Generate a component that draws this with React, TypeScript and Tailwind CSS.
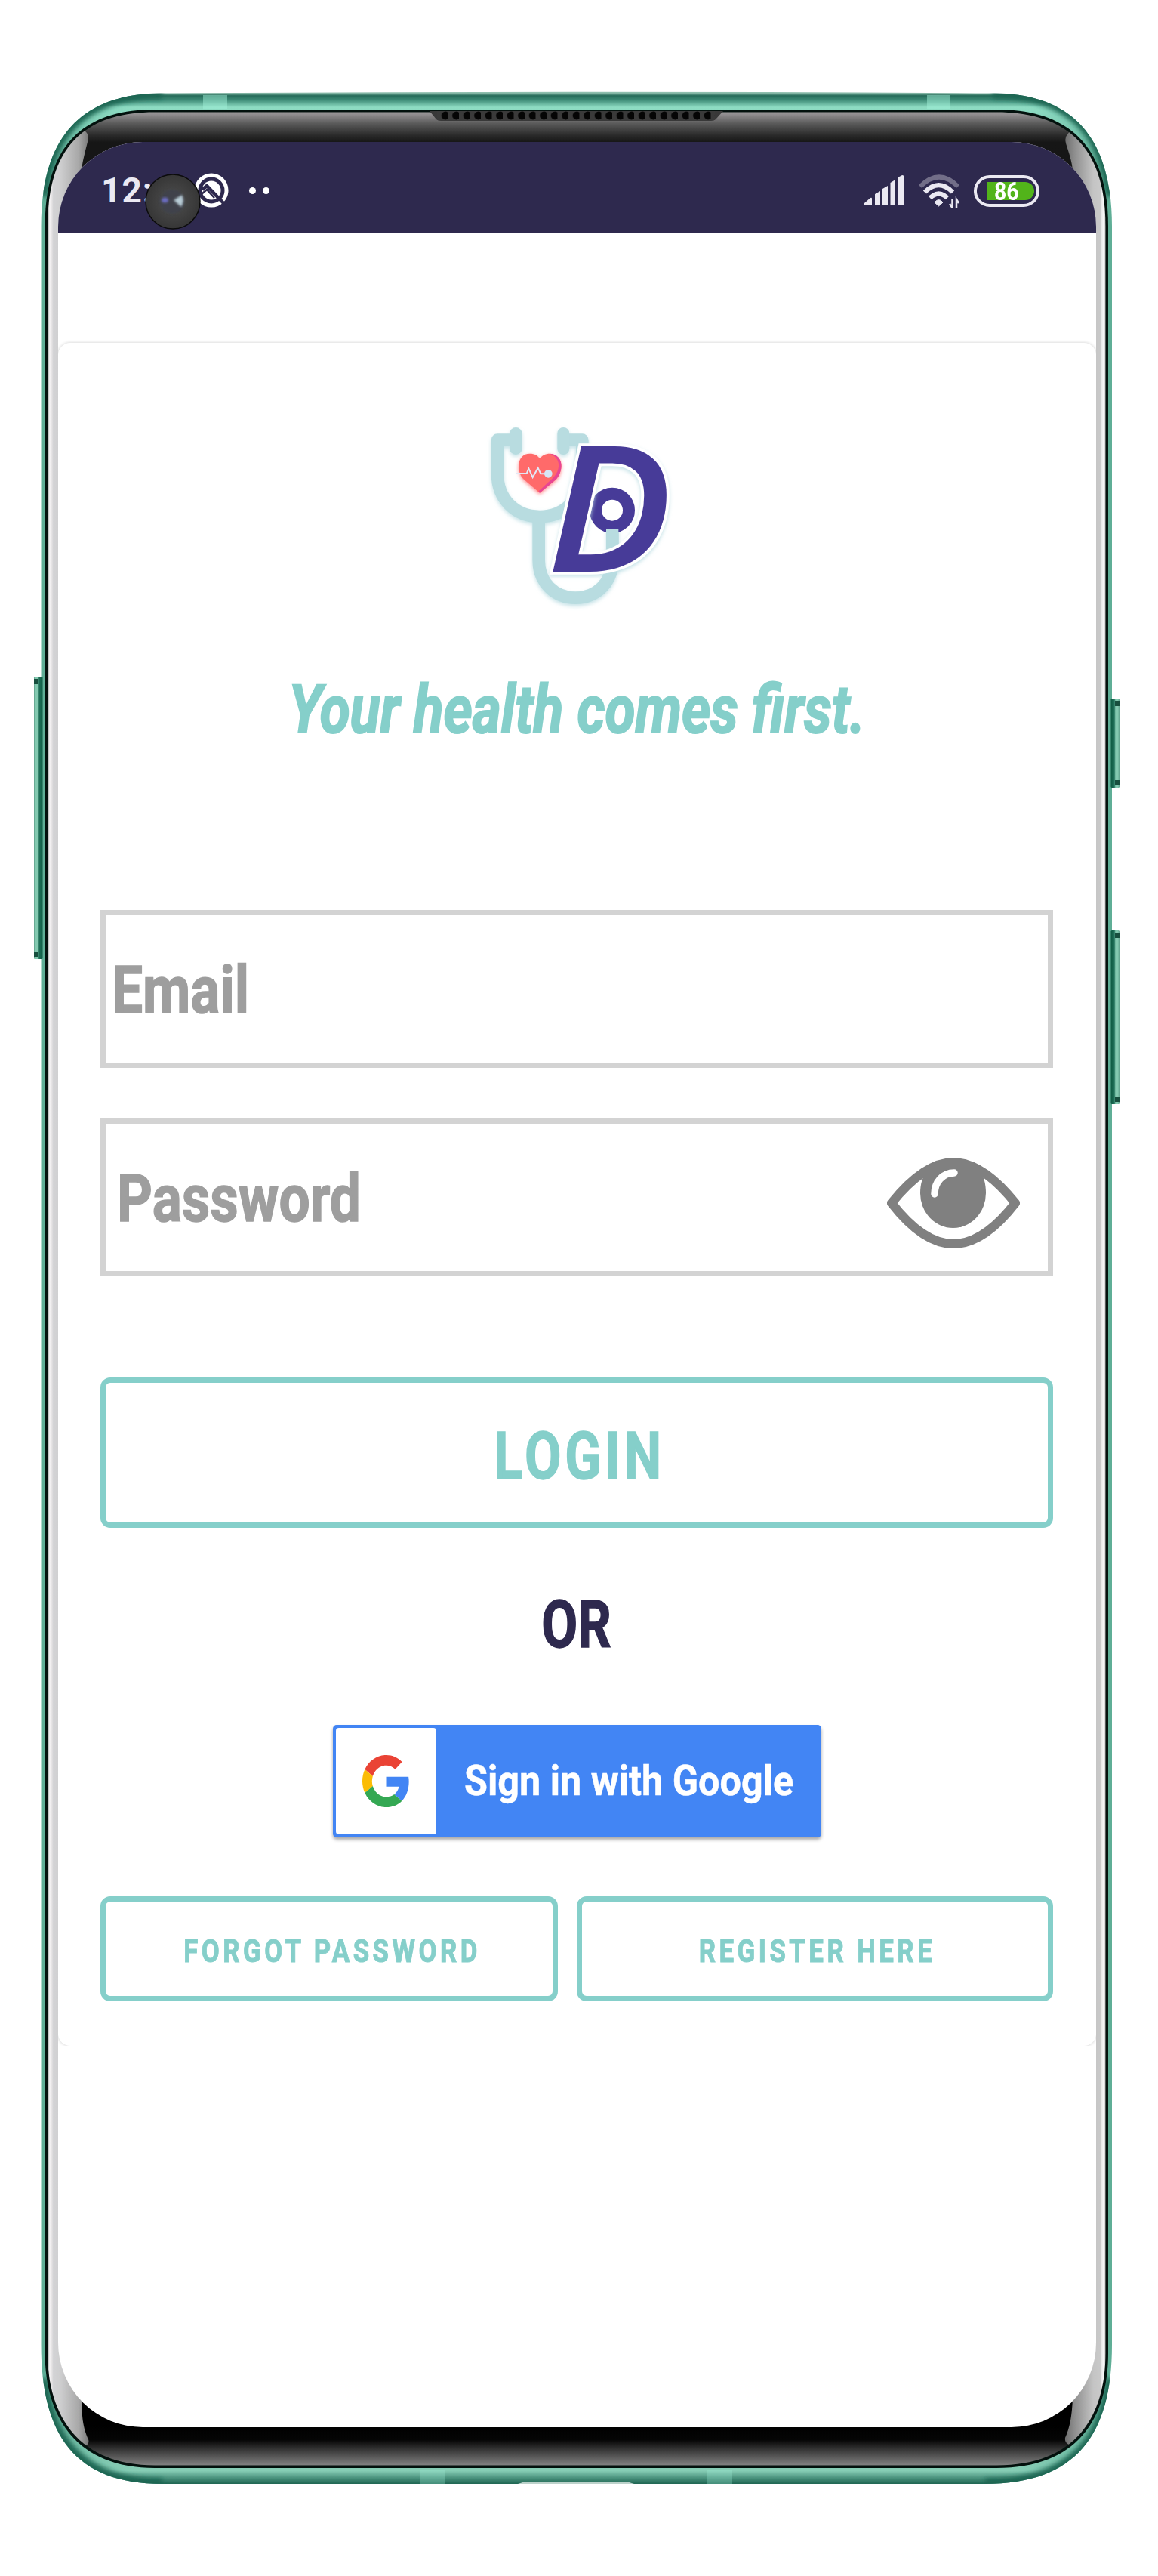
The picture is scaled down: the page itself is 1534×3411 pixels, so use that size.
import type { ReactNode } from "react";

const SIDE_KEYS = [
  { x: 45, y: 896, h: 374, flip: false },
  { x: 1472, y: 925, h: 118, flip: true },
  { x: 1472, y: 1232, h: 230, flip: true },
];

const BODY =
  "M54.500 300C54.500 190 100 123.500 215 123.500Q767 120 1315 123.500C1428 123.500 1473 190 1473 300V3105C1473 3225 1425 3289 1305 3289H215C100 3289 54.500 3225 54.500 3105Z";

/* Metal body, glass bezel, side keys and speaker grille of the handset. */
function DeviceBody() {
  return (
    <svg className="absolute inset-0 h-full w-full" viewBox="0 0 1534 3411" aria-hidden="true">
      <defs>
        <linearGradient id="metal" x1="0" y1="123" x2="0" y2="3289" gradientUnits="userSpaceOnUse">
          <stop offset="0" stopColor="#8fbfae" />
          <stop offset="0.0012" stopColor="#256b59" />
          <stop offset="0.003" stopColor="#3e8c77" />
          <stop offset="0.006" stopColor="#8edcc3" />
          <stop offset="0.03" stopColor="#5fae96" />
          <stop offset="0.97" stopColor="#5fae96" />
          <stop offset="0.9945" stopColor="#86cdb5" />
          <stop offset="0.9975" stopColor="#4a927d" />
          <stop offset="1" stopColor="#1f6653" />
        </linearGradient>
        <linearGradient id="glass" x1="0" y1="148" x2="0" y2="3265" gradientUnits="userSpaceOnUse">
          <stop offset="0" stopColor="#a09c9e" />
          <stop offset="0.005" stopColor="#5a5a5a" />
          <stop offset="0.01" stopColor="#2a2a2a" />
          <stop offset="0.013" stopColor="#161616" />
          <stop offset="0.983" stopColor="#000" />
          <stop offset="0.989" stopColor="#050505" />
          <stop offset="0.994" stopColor="#404040" />
          <stop offset="1" stopColor="#828282" />
        </linearGradient>
        <linearGradient id="edgeL" x1="63" y1="0" x2="118" y2="0" gradientUnits="userSpaceOnUse">
          <stop offset="0" stopColor="#8d8d8d" />
          <stop offset="0.05" stopColor="#f6f4f5" />
          <stop offset="0.1" stopColor="#e6e4e5" />
          <stop offset="0.14" stopColor="#d3d3d5" />
          <stop offset="0.3" stopColor="#cfcfd0" />
          <stop offset="0.75" stopColor="#a8a8a8" />
          <stop offset="1" stopColor="#777" />
        </linearGradient>
        <linearGradient id="edgeR" x1="1465" y1="0" x2="1410" y2="0" gradientUnits="userSpaceOnUse">
          <stop offset="0" stopColor="#8d8d8d" />
          <stop offset="0.04" stopColor="#fff" />
          <stop offset="0.1" stopColor="#e8e8e8" />
          <stop offset="0.13" stopColor="#c9c9c9" />
          <stop offset="0.3" stopColor="#c4c4c4" />
          <stop offset="0.75" stopColor="#8f8f8f" />
          <stop offset="1" stopColor="#6b6b6b" />
        </linearGradient>
        <linearGradient id="key" x1="0" y1="0" x2="1" y2="0">
          <stop offset="0" stopColor="#5fa08b" />
          <stop offset="0.2" stopColor="#83c9b0" />
          <stop offset="0.45" stopColor="#83c9b0" />
          <stop offset="0.6" stopColor="#1f6f58" />
          <stop offset="1" stopColor="#0e5a42" />
        </linearGradient>
        <pattern id="holes" x="579" y="147" width="14.5" height="12" patternUnits="userSpaceOnUse">
          <rect width="14.5" height="12" fill="#3a3a3a" />
          <circle cx="11" cy="6" r="5.4" fill="#050505" />
        </pattern>
        <filter id="shade" x="0" y="0" width="1534" height="3411" filterUnits="userSpaceOnUse">
          <feGaussianBlur stdDeviation="3" />
        </filter>
        <clipPath id="body">
          <path d={BODY} />
        </clipPath>
        <clipPath id="bezel">
          <path d="M63 300C63 202 105 148.500 205 148.500H1320C1420 148.500 1464.500 202 1464.500 300V3115C1464.500 3200 1425 3264.500 1320 3264.500H205C105 3264.500 63 3200 63 3115Z" />
        </clipPath>
      </defs>
      <path d={BODY} fill="url(#metal)" />
      {SIDE_KEYS.map((k) => (
        <g key={k.y} transform={k.flip ? `translate(${k.x + 11} 0) scale(-1 1)` : `translate(${k.x} 0)`}>
          <rect x="0" y={k.y} width="11.5" height={k.h} rx="1.5" fill="url(#key)" />
          <rect x="0" y={k.y + 3} width="6" height="7" fill="#174f3e" />
          <rect x="0" y={k.y + k.h - 10} width="6" height="7" fill="#174f3e" />
        </g>
      ))}
      <g clipPath="url(#body)">
        <g filter="url(#shade)" fill="none" stroke="#1f6653" strokeWidth="14">
          <path d="M57 260C64 180 110 123.500 215 123.500" />
          <path d="M1315 123.500C1422 123.500 1464 180 1471 260" />
          <path d="M57 3150C64 3230 110 3289 215 3289" />
          <path d="M1305 3289C1418 3289 1464 3230 1471 3150" />
        </g>
      </g>
      <rect x="269" y="126" width="32" height="18" fill="#a0f0d8" opacity="0.5" />
      <rect x="1228" y="126" width="31" height="18" fill="#a0f0d8" opacity="0.5" />
      <rect x="557" y="3270" width="33" height="19" fill="#a0f0d8" opacity="0.3" />
      <rect x="937" y="3270" width="33" height="19" fill="#a0f0d8" opacity="0.3" />
      <path d="M686 3289L694 3286.500H832L840 3289Z" fill="#bcd2cb" />
      <path
        d="M59.500 300C59.500 200 103 145 205 145H1320C1422 145 1468 200 1468 300V3115C1468 3203 1427 3268 1320 3268H205C103 3268 59.500 3203 59.500 3115Z"
        fill="#03110d"
      />
      <g clipPath="url(#bezel)">
        <rect x="60" y="148" width="1408" height="3118" fill="url(#glass)" />
        <path d="M60 160H100L115 176Q118 180 116.500 186C112 204 109 215 108 226V3170C108 3200 110 3215 117 3230Q119 3236 112 3240L60 3260Z" fill="url(#edgeL)" />
        <path d="M1467 160H1428L1414 178Q1410 182 1412 190C1417 205 1420 215 1421 226V3175C1420 3200 1417 3215 1411 3228Q1410 3234 1416 3237L1467 3260Z" fill="url(#edgeR)" />
      </g>
      <path d="M569 147H958L948 158Q946 160 942 160H584Q580 160 578 158Z" fill="#383838" />
      <rect x="579" y="147" width="368" height="12" fill="url(#holes)" />
    </svg>
  );
}

function StatusBar() {
  return (
    <header className="flex h-[120px] items-start justify-between bg-[#2e294e] pr-[75px] pl-[57px]">
      <div className="relative flex items-center pt-[41px]">
        <span className="w-[123px] text-[46px] leading-[44px] font-bold tracking-[1px] whitespace-nowrap text-[#ebe9f2]">
          12:1
        </span>
        <svg className="h-[46px] w-[46px]" viewBox="0 0 46 46">
          <circle cx="23" cy="23" r="20" fill="none" stroke="#fff" strokeWidth="5" />
          <circle cx="23" cy="23" r="12.5" fill="#fff" />
          <path d="M11 22L17 17L41 42" fill="none" stroke="#2e294e" strokeWidth="4.5" />
          <path d="M10 28L17 22L27 33" fill="none" stroke="#2e294e" strokeWidth="2.5" />
        </svg>
        <div className="ml-[27px] flex gap-[9px]">
          <span className="h-[9px] w-[9px] rounded-full bg-white" />
          <span className="h-[9px] w-[9px] rounded-full bg-white" />
        </div>
        <svg className="absolute top-[41px] left-[57px] h-[76px] w-[76px]" viewBox="0 0 76 76">
          <defs>
            <radialGradient id="lens">
              <stop offset="0" stopColor="#23282c" />
              <stop offset="0.3" stopColor="#3a4048" />
              <stop offset="0.45" stopColor="#444" />
              <stop offset="1" stopColor="#363636" />
            </radialGradient>
            <filter id="soft" x="-50%" y="-50%" width="200%" height="200%">
              <feGaussianBlur stdDeviation="1.5" />
            </filter>
          </defs>
          <circle cx="38" cy="38" r="36" fill="url(#lens)" stroke="#0b0b0b" strokeWidth="1.5" />
          <circle cx="37" cy="38" r="16" fill="#3f434b" filter="url(#soft)" />
          <ellipse cx="27.5" cy="36" rx="4.5" ry="3.5" fill="#6a6cc0" filter="url(#soft)" />
          <path d="M39 36L50 29Q54 37 49 45Z" fill="#b8ccd6" filter="url(#soft)" />
        </svg>
      </div>
      <div className="flex items-center pt-[42px]">
        <svg className="h-[46px] w-[52px]" viewBox="0 0 52 46" fill="#ebe9f2">
          <path d="M0 41V39L8 32Q10 31 10 33V42H1Q0 42 0 41Z" />
          <path d="M14 42V27L21 23V42Z" />
          <path d="M24 42V20L31 16V42Z" />
          <path d="M34.500 42V12L41 8V42Z" />
          <path d="M44.500 42V5L50 2Q52 2 52 3V41Q52 42 51 42Z" />
        </svg>
        <svg className="ml-[20px] h-[46px] w-[55px]" viewBox="0 0 55 46" fill="none" stroke="#ebe9f2">
          <path d="M2 17Q27 -8 52 17" stroke="#726e88" strokeWidth="6" />
          <path d="M8 24.500Q26.500 6 45 24.500" strokeWidth="6" />
          <path d="M15 32Q26.500 21 38 32" strokeWidth="6" />
          <path d="M21 38Q26.500 31 32 38L26.500 43Z" fill="#ebe9f2" strokeWidth="1" />
          <path d="M44.500 33V45L41 40M50 46V34L53 39" strokeWidth="2.5" />
        </svg>
        <div className="ml-[18px] flex h-[42px] w-[87px] items-center rounded-full border-4 border-[#ebe9f2] pl-[13px]">
          <div className="flex h-[24px] w-[63px] items-center rounded-l-[3px] rounded-r-full bg-[#52b41a] pl-[10px]">
            <span className="origin-left scale-x-[0.86] text-[33px] leading-none font-bold text-white">86</span>
          </div>
        </div>
      </div>
    </header>
  );
}

/* Stethoscope, heartbeat and monogram. */
function Logo() {
  return (
    <svg className="h-[290px] w-[300px] overflow-visible" viewBox="0 0 900 870" aria-label="Logo">
      <defs>
        <filter id="halo" x="-20%" y="-20%" width="140%" height="140%">
          <feDropShadow dx="0" dy="8" stdDeviation="8" floodColor="#b8dce2" floodOpacity="0.8" />
        </filter>
        <filter id="glow" x="-30%" y="-30%" width="160%" height="160%">
          <feDropShadow dx="0" dy="6" stdDeviation="8" floodColor="#ff6b70" floodOpacity="0.8" />
        </filter>
      </defs>
      <g filter="url(#halo)">
        <path d="M190 128H117V262C117 360 185 432 285 432C385 432 454 360 454 262V128H380" fill="none" stroke="#b8dce0" strokeWidth="50" strokeLinejoin="round" />
        <path d="M281 440V605C281 695 345 755 427 755C510 755 574 695 574 605V480" fill="none" stroke="#b8dce0" strokeWidth="50" />
        <rect x="165" y="78" width="50" height="108" rx="25" fill="#b8dce0" />
        <rect x="355" y="78" width="48" height="108" rx="24" fill="#b8dce0" />
      </g>
      <path d="M285 338L222 284C190 255 193 182 245 182C265 182 278 190 285 202C293 190 308 182 325 182C385 187 378 255 350 284Z" fill="#ff6b6b" filter="url(#glow)" />
      <path d="M325 182C385 187 378 255 350 284L285 338L281 331L338 278C368 248 372 200 325 182Z" fill="#e94593" />
      <path d="M190 261H233L241 241L257 276L278 239L289 262H308" fill="none" stroke="#e2e8f6" strokeWidth="6" />
      <circle cx="319" cy="262" r="16" fill="#d6e6f6" />
      <circle cx="573" cy="407" r="66" fill="none" stroke="#473b98" strokeWidth="48" />
      <path d="M549 480H598V575H549Z" fill="#b8dce0" />
      <text
        x="312"
        y="650"
        textLength="500"
        lengthAdjust="spacingAndGlyphs"
        fontFamily="Open Sans"
        fontStyle="italic"
        fontWeight="590"
        fontSize="694"
        fill="#473b98"
        stroke="#fff"
        strokeWidth="22"
        paintOrder="stroke"
        filter="url(#halo)"
      >
        D
      </text>
    </svg>
  );
}

function EyeIcon() {
  return (
    <svg className="relative top-[6px] h-[120px] w-[176px]" viewBox="0 0 176 120">
      <path d="M6 60C30 30 58 6 88 6S146 30 170 60C146 91 118 114 88 114S30 91 6 60Z" fill="none" stroke="#808080" strokeWidth="12" strokeLinejoin="round" />
      <path d="M54 16Q88 -4 122 16C128 22 131 35 131 47A43.500 46 0 0 1 44 47C44 35 47 24 54 16Z" fill="#808080" />
      <path d="M63 48C63 32 74 20 89 20" fill="none" stroke="#fff" strokeWidth="9.5" strokeLinecap="round" />
    </svg>
  );
}

function GoogleG() {
  return (
    <svg className="h-[69px] w-[63px]" viewBox="0 0 48 48" preserveAspectRatio="none">
      <path fill="#EA4335" d="M24 9.500c3.540 0 6.710 1.220 9.210 3.600l6.850-6.850C35.900 2.380 30.470 0 24 0 14.620 0 6.510 5.380 2.560 13.220l7.980 6.190C12.430 13.720 17.740 9.500 24 9.500z" />
      <path fill="#4285F4" d="M46.980 24.550c0-1.570-.15-3.090-.38-4.550H24v9.020h12.940c-.58 2.960-2.260 5.480-4.780 7.180l7.730 6c4.510-4.180 7.090-10.360 7.090-17.650z" />
      <path fill="#FBBC05" d="M10.530 28.590c-.48-1.450-.76-2.990-.76-4.590s.27-3.140.76-4.590l-7.980-6.190C.92 16.460 0 20.120 0 24c0 3.880.92 7.540 2.560 10.780l7.970-6.190z" />
      <path fill="#34A853" d="M24 48c6.480 0 11.930-2.130 15.890-5.810l-7.730-6c-2.150 1.450-4.920 2.300-8.160 2.300-6.260 0-11.570-4.220-13.470-9.910l-7.980 6.190C6.510 42.620 14.620 48 24 48z" />
    </svg>
  );
}

function OutlineButton({ className, children }: { className: string; children: ReactNode }) {
  return (
    <button
      className={`flex items-center justify-center rounded-[13px] border-[7px] border-[#85cfca] font-bold whitespace-nowrap text-[#85cfca] ${className}`}
    >
      {children}
    </button>
  );
}

export default function App() {
  return (
    <div className="relative h-[3411px] w-[1534px] overflow-hidden bg-white pt-[188px] pl-[77px] font-['Roboto',sans-serif]">
      <DeviceBody />
      <main className="relative flex h-[3026px] w-[1375px] flex-col overflow-hidden rounded-[112px] bg-white">
        <StatusBar />
        <div className="mt-[138px] overflow-hidden pt-[8px]">
          <section className="flex h-[2255px] flex-col items-center rounded-[16px] bg-white pr-[57px] pl-[56px] shadow-[0_0_4px_rgba(0,0,0,0.2)]">
            <div className="mt-[86px] flex h-[290px] w-full justify-start pl-[487px]">
              <Logo />
            </div>
            <p className="mt-[58px] h-[104px] scale-x-[0.832] text-[88px] leading-[104px] font-bold whitespace-nowrap text-[#85cfca] italic [-webkit-text-stroke:2px_#85cfca]">
              Your health comes first.
            </p>
            <div className="mt-[213px] flex h-[209px] w-full items-center border-[7px] border-[#d3d3d3] pt-[3px] pl-[8px]">
              <span className="origin-left scale-x-[0.83] text-[88px] font-bold text-[#9e9e9e] [-webkit-text-stroke:1.5px_#9e9e9e]">Email</span>
            </div>
            <div className="mt-[67px] flex h-[209px] w-full items-center justify-between border-[7px] border-[#d3d3d3] pt-[3px] pr-[37px] pl-[15px]">
              <span className="origin-left scale-x-[0.83] text-[88px] font-bold text-[#9e9e9e] [-webkit-text-stroke:1.5px_#9e9e9e]">Password</span>
              <EyeIcon />
            </div>
            <OutlineButton className="mt-[134px] h-[199px] w-full pt-[8px] pl-[8px] text-[88px]">
              <span className="scale-x-[0.8] tracking-[6px] [-webkit-text-stroke:1.5px_#85cfca]">LOGIN</span>
            </OutlineButton>
            <p className="mt-[76px] h-[106px] scale-x-[0.79] text-[88px] leading-[104px] font-bold text-[#2e294e] [-webkit-text-stroke:1.5px_#2e294e]">OR</p>
            <button className="mt-[79px] flex h-[149px] w-[647px] items-center rounded-[5px] bg-[#4285f4] pl-[4px] whitespace-nowrap shadow-[0_3px_4px_rgba(0,0,0,0.35)]">
              <span className="flex h-[141px] w-[133px] shrink-0 items-center justify-center rounded-[4px] bg-white">
                <GoogleG />
              </span>
              <span className="ml-[37px] origin-left scale-x-[0.915] text-[55px] font-bold text-white [-webkit-text-stroke:0.5px_#fff]">Sign in with Google</span>
            </button>
            <div className="mt-[78px] flex w-full justify-between">
              <OutlineButton className="h-[139px] w-[606px] pt-[6px] pl-[8px] text-[43px]">
                <span className="scale-x-[0.81] tracking-[5.5px] [-webkit-text-stroke:1px_#85cfca]">FORGOT PASSWORD</span>
              </OutlineButton>
              <OutlineButton className="h-[139px] w-[631px] pt-[6px] pl-[6px] text-[43px]">
                <span className="scale-x-[0.81] tracking-[5.5px] [-webkit-text-stroke:1px_#85cfca]">REGISTER HERE</span>
              </OutlineButton>
            </div>
          </section>
        </div>
      </main>
    </div>
  );
}
